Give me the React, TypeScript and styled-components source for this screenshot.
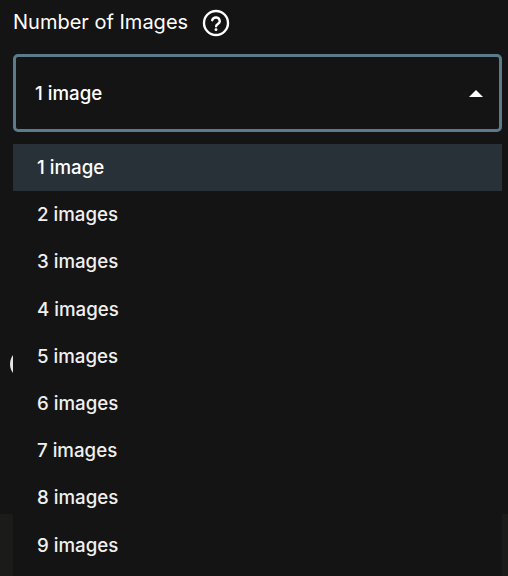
import React from 'react';
import styled, { createGlobalStyle } from 'styled-components';

const GlobalStyle = createGlobalStyle`
  html, body {
    margin: 0;
    height: 100%;
    background: #141414;
  }
  body {
    font-family: Inter, "Liberation Sans", sans-serif;
    color: #fff;
    overflow: hidden;
  }
`;

const Page = styled.div`
  position: relative;
  width: 508px;
  height: 576px;
  overflow: hidden;
  padding: 7px 6px 0 13px;
  box-sizing: border-box;
`;

const LabelRow = styled.div`
  display: flex;
  align-items: center;
  gap: 14px;
  height: 31px;
`;

const Label = styled.span`
  font-size: 20px;
  line-height: 28px;
  margin-top: -2px;
  color: #fff;
`;

const SelectBox = styled.div`
  display: flex;
  align-items: center;
  justify-content: space-between;
  box-sizing: border-box;
  height: 78px;
  margin-top: 16px;
  padding: 1px 16px 0 19px;
  border: 3px solid #5b7a8c;
  border-radius: 5px;
  font-size: 18.7px;
  font-weight: 500;
`;

const Caret = styled.span`
  width: 0;
  height: 0;
  margin-top: -1px;
  border-left: 7px solid transparent;
  border-right: 7px solid transparent;
  border-bottom: 7px solid #fff;
`;

const Menu = styled.ul`
  position: relative;
  z-index: 1;
  list-style: none;
  margin: 12px 0 0;
  padding: 0 0 12px;
  background: #141414;
`;

const Option = styled.li<{ $active?: boolean }>`
  height: 47.2px;
  line-height: 48px;
  padding-left: 24px;
  font-size: 18.7px;
  font-weight: 500;
  color: ${(p) => (p.$active ? '#ffffff' : '#f0f0f0')};
  background: ${(p) => (p.$active ? '#293138' : 'transparent')};
`;

const PeekingDot = styled.span`
  position: absolute;
  left: 10px;
  top: 349px;
  width: 30px;
  height: 30px;
  border-radius: 50%;
  background: #e4e4e4;
`;

const PeekingStrip = styled.span`
  position: absolute;
  left: 0;
  right: 0;
  top: 514px;
  bottom: 0;
  background: #1b1b19;
`;

const options = ['1 image', '2 images', '3 images', '4 images', '5 images', '6 images', '7 images', '8 images', '9 images'];

const HelpIcon = () => (
  <svg width="28" height="28" viewBox="0 0 28 28" fill="none" stroke="#fff" strokeWidth="2.4" strokeLinecap="round">
    <circle cx="14" cy="14" r="12" />
    <path d="M10.2 11.2a3.9 3.9 0 0 1 7.6 1c0 2.5-3.6 2.9-3.7 5" />
    <path d="M14 20.6v.1" strokeWidth="2.8" />
  </svg>
);

const App: React.FC = () => {
  return (
    <>
      <GlobalStyle />
      <Page>
        <PeekingDot />
        <PeekingStrip />
        <LabelRow>
          <Label>Number of Images</Label>
          <HelpIcon />
        </LabelRow>
        <SelectBox>
          <span>1 image</span>
          <Caret />
        </SelectBox>
        <Menu>
          {options.map((option, i) => (
            <Option key={option} $active={i === 0}>
              {option}
            </Option>
          ))}
        </Menu>
      </Page>
    </>
  );
};

export default App;
